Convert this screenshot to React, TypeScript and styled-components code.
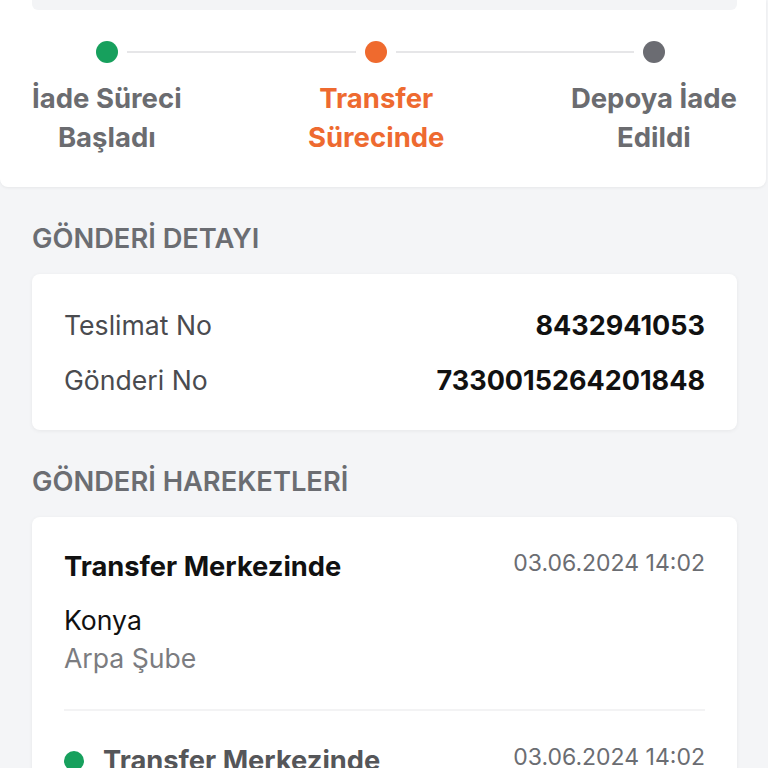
import React from 'react';
import styled, { createGlobalStyle } from 'styled-components';

const GlobalStyle = createGlobalStyle`
  html, body {
    margin: 0;
    padding: 0;
    background: #f4f5f7;
  }
  body {
    font-family: Inter, "Noto Sans", sans-serif;
    -webkit-font-smoothing: antialiased;
  }
  * { box-sizing: border-box; }
`;

const steps = [
  { label: ['İade Süreci', 'Başladı'], color: '#17a05d', text: '#6b6c70' },
  { label: ['Transfer', 'Sürecinde'], color: '#ef6a2e', text: '#ee6a30' },
  { label: ['Depoya İade', 'Edildi'], color: '#6b6c72', text: '#6b6c70' },
];

const movements = [
  { title: 'Transfer Merkezinde', date: '03.06.2024 14:02', city: 'Konya', branch: 'Arpa Şube', active: false },
  { title: 'Transfer Merkezinde', date: '03.06.2024 14:02', city: 'Konya', branch: 'Arpa Şube', active: true },
];

const App = () => {
  return (
    <Page>
      <GlobalStyle />
      <TopCard>
        <TopStrip />
        <Stepper>
          {steps.map((s, i) => (
            <Step key={i} first={i === 0} last={i === steps.length - 1}>
              <Dot color={s.color} />
              <StepLabel color={s.text}>
                {s.label[0]}
                <br />
                {s.label[1]}
              </StepLabel>
            </Step>
          ))}
        </Stepper>
      </TopCard>

      <Section>
        <SectionTitle>GÖNDERİ DETAYI</SectionTitle>
        <Card>
          <DetailRows>
            <DetailRow>
              <DetailLabel>Teslimat No</DetailLabel>
              <DetailValue>8432941053</DetailValue>
            </DetailRow>
            <DetailRow>
              <DetailLabel>Gönderi No</DetailLabel>
              <DetailValue>7330015264201848</DetailValue>
            </DetailRow>
          </DetailRows>
        </Card>
      </Section>

      <Section>
        <SectionTitle>GÖNDERİ HAREKETLERİ</SectionTitle>
        <Card>
          {movements.map((m, i) => (
            <Movement key={i} divider={i < movements.length - 1}>
              <MoveHead>
                <MoveTitle active={m.active}>
                  {m.active && <SmallDot />}
                  {m.title}
                </MoveTitle>
                <MoveDate>{m.date}</MoveDate>
              </MoveHead>
              <Location>
                <City>{m.city}</City>
                <Branch>{m.branch}</Branch>
              </Location>
            </Movement>
          ))}
        </Card>
      </Section>
    </Page>
  );
};

export default App;

const Page = styled.div`
  width: 768px;
  min-height: 768px;
  background: #f4f5f7;
  padding-bottom: 40px;
`;

const TopCard = styled.div`
  background: #fff;
  width: 766px;
  border-radius: 0 0 8px 8px;
  box-shadow: 0 1px 3px rgba(0, 0, 0, 0.06);
  padding: 0 29px 30px 32px;
`;

const TopStrip = styled.div`
  height: 10px;
  background: #f3f4f6;
  border-radius: 0 0 6px 6px;
`;

const Stepper = styled.div`
  display: grid;
  grid-template-columns: auto 1fr auto;
  margin-top: 31px;
`;

const Step = styled.div<{ first: boolean; last: boolean }>`
  position: relative;
  display: flex;
  flex-direction: column;
  align-items: center;

  &::before,
  &::after {
    content: '';
    position: absolute;
    top: 10px;
    height: 2px;
    background: #e6e6e8;
  }
  &::before {
    left: 0;
    right: calc(50% + 20px);
    display: ${(p) => (p.first ? 'none' : 'block')};
  }
  &::after {
    left: calc(50% + 20px);
    right: 0;
    display: ${(p) => (p.last ? 'none' : 'block')};
  }
`;

const Dot = styled.span<{ color: string }>`
  width: 22px;
  height: 22px;
  border-radius: 50%;
  background: ${(p) => p.color};
`;

const StepLabel = styled.div<{ color: string }>`
  margin-top: 16px;
  font-size: 27.5px;
  line-height: 39px;
  font-weight: 650;
  text-align: center;
  color: ${(p) => p.color};
  white-space: nowrap;
`;

const Section = styled.section`
  padding: 0 31px 0 32px;
`;

const SectionTitle = styled.h2`
  margin: 37px 0 20px;
  font-size: 27.3px;
  line-height: 30px;
  font-weight: 600;
  color: #6b6d72;
`;

const Card = styled.div`
  background: #fff;
  border-radius: 8px;
  box-shadow: 0 1px 4px rgba(0, 0, 0, 0.06);
  padding: 0 32px;
`;

const DetailRows = styled.div`
  display: flex;
  flex-direction: column;
  gap: 16px;
  padding: 32px 0 30px;
`;

const DetailRow = styled.div`
  display: flex;
  justify-content: space-between;
  align-items: center;
  font-size: 26.6px;
  line-height: 39px;
`;

const DetailLabel = styled.span`
  color: #4a4b4f;
`;

const DetailValue = styled.span`
  color: #111;
  font-weight: 700;
  font-size: 27px;
`;

const Movement = styled.div<{ divider: boolean }>`
  padding: 30px 0 32px;
  border-bottom: ${(p) => (p.divider ? '2px solid #f3f3f4' : 'none')};
`;

const MoveHead = styled.div`
  display: flex;
  justify-content: space-between;
  align-items: flex-start;
`;

const MoveTitle = styled.div<{ active: boolean }>`
  display: flex;
  align-items: center;
  gap: 19px;
  font-size: 27.3px;
  line-height: 39px;
  font-weight: 700;
  color: ${(p) => (p.active ? '#555659' : '#111')};
`;

const SmallDot = styled.span`
  width: 20px;
  height: 20px;
  border-radius: 50%;
  background: #17a05d;
`;

const MoveDate = styled.div`
  font-size: 23px;
  line-height: 33px;
  color: #6b6d72;
`;

const Location = styled.div`
  margin-top: 15px;
  font-size: 26.6px;
  line-height: 38px;
`;

const City = styled.div`
  color: #111;
`;

const Branch = styled.div`
  color: #7b7c80;
`;
